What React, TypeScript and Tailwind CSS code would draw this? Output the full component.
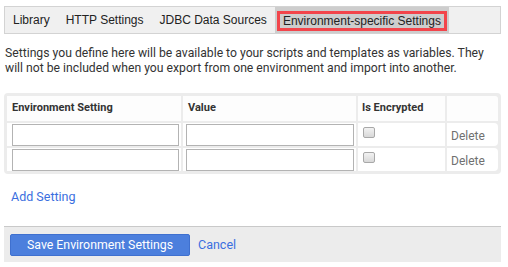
import { useState } from "react";

const tabs = ["Library", "HTTP Settings", "JDBC Data Sources", "Environment-specific Settings"];

export default function App() {
  const [rows] = useState([0, 1]);

  return (
    <div className="w-[508px] h-[267px] bg-white pl-[4px] pr-[7px] pt-[6px] font-['Roboto',sans-serif] text-[#333]">
      {/* tab strip */}
      <div className="flex h-[28px] border border-[#d3d3d3] bg-[#f0f0f0] font-['Liberation_Sans',Arial,sans-serif] text-[12px] text-[#222]">
        {tabs.map((t, i) =>
          i === 3 ? (
            <div key={t} className="flex items-center bg-[#cdcdcd] px-[2px] pt-[3px] pb-[1px]">
              <span className="flex h-[20px] items-center border-[3px] border-[#f2454b] px-[3px] leading-none">{t}</span>
            </div>
          ) : (
            <div key={t} className="flex items-center px-[8px]">
              {t}
            </div>
          )
        )}
      </div>

      <p className="mt-[12px] pl-[1px] text-[12.2px] leading-[15px] text-[#333]">
        Settings you define here will be available to your scripts and templates as variables. They
        <br />
        will not be included when you export from one environment and import into another.
      </p>

      {/* settings table */}
      <div className="mt-[17px] rounded-[4px] bg-[#ececec] p-[3px]">
        <div className="grid grid-cols-[174px_173px_87px_51px] gap-[2px]">
          <div className="flex h-[25px] items-center bg-[#fdfdfd] pl-[5px] text-[11px] font-bold text-[#333]">
            Environment Setting
          </div>
          <div className="flex h-[25px] items-center bg-[#fdfdfd] pl-[5px] text-[11px] font-bold text-[#333]">Value</div>
          <div className="flex h-[25px] items-center bg-[#fdfdfd] pl-[4px] text-[11px] font-bold text-[#333]">
            Is Encrypted
          </div>
          <div className="h-[25px] rounded-tr-[3px] bg-[#fdfdfd]" />
          {rows.map((r) => (
            <div key={r} className="contents">
              <div className="h-[23px] bg-white pl-[5px] pr-[2px] pt-[1px]">
                <input className="block h-[22px] w-full border border-[#b3b3b3] bg-white outline-none" />
              </div>
              <div className="h-[23px] bg-white pl-[3px] pr-[2px] pt-[1px]">
                <input className="block h-[22px] w-full border border-[#b3b3b3] bg-white outline-none" />
              </div>
              <div className="h-[23px] bg-white pl-[5px] pt-[4px]">
                <span className="block h-[11px] w-[12px] rounded-[2px] border border-[#a8a8a8] bg-gradient-to-b from-[#f2f2f2] to-[#d8d8d8]" />
              </div>
              <div className="flex h-[23px] items-end rounded-r-[4px] bg-white pb-[1px] pl-[4px] text-[12px] text-[#707070]">
                Delete
              </div>
            </div>
          ))}
        </div>
      </div>

      <div className="mt-[15px] pl-[7px] text-[12.5px] leading-[15px] text-[#3a6fe0]">Add Setting</div>

      {/* footer */}
      <div className="mt-[22px] flex h-[36px] items-start gap-[8px] border-t border-[#c9c9c9] bg-[#ececec] pl-[6px] pt-[7px]">
        <button className="h-[22px] w-[180px] rounded-[2px] border border-[#3f70cf] bg-[#4c7fdd] text-[12.3px] text-white">
          Save Environment Settings
        </button>
        <span className="pt-[2px] text-[12.5px] text-[#3a6fe0]">Cancel</span>
      </div>
    </div>
  );
}
